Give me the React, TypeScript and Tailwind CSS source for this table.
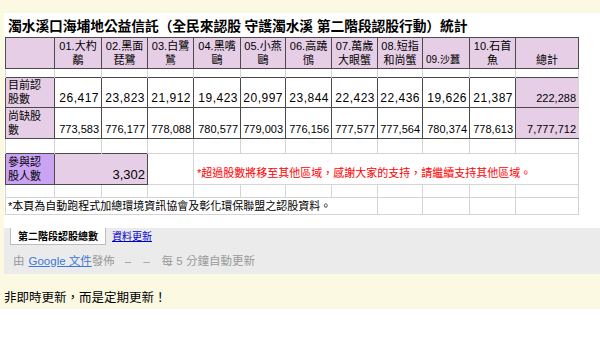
import React from "react"

const cols = ["w-[49px]", "w-[47px]", "w-[46px]", "w-[46px]", "w-[47px]", "w-[45px]", "w-[46px]", "w-[46px]", "w-[45px]", "w-[47px]", "w-[46px]", "w-[63px]"]

const species = [
  ["01.大杓", "鷸"],
  ["02.黑面", "琵鷺"],
  ["03.白鷺", "鷥"],
  ["04.黑嘴", "鷗"],
  ["05.小燕", "鷗"],
  ["06.高蹺", "鴴"],
  ["07.萬歲", "大眼蟹"],
  ["08.短指", "和尚蟹"],
  ["09.沙蠶", ""],
  ["10.石首", "魚"],
]

const adopted = ["26,417", "23,823", "21,912", "19,423", "20,997", "23,844", "22,423", "22,436", "19,626", "21,387"]
const missing = ["773,583", "776,177", "778,088", "780,577", "779,003", "776,156", "777,577", "777,564", "780,374", "778,613"]

const dark = "border border-[#4a4a4a]"
const light = "border border-[#d4d4d4]"

function Spacer({ h }: { h: string }) {
  return (
    <tr className={h}>
      {cols.map((_, i) => (
        <td key={i} className="border-x border-[#d4d4d4] p-0" />
      ))}
    </tr>
  )
}

export default function App() {
  return (
    <div className="w-[600px] h-[345px] bg-white overflow-hidden font-['Liberation_Sans','Noto_Sans_CJK_TC',sans-serif] text-black">
      <div className="bg-[#fbf9e2] pt-[13px] pl-[4px]">
        {/* published sheet */}
        <div className="bg-white pt-[3px] pb-[13px]">
          <h1 className="h-[21px] pl-[4px] text-[13.8px] leading-[21px] font-bold whitespace-nowrap tracking-[-0.1px]">
            濁水溪口海埔地公益信託（全民來認股 守護濁水溪 第二階段認股行動）統計
          </h1>

          <table className="table-fixed border-collapse w-[573px] ml-[1px] text-[11px] leading-[14px]">
            <colgroup>
              {cols.map((c, i) => (
                <col key={i} className={c} />
              ))}
            </colgroup>
            <tbody>
              <tr className="h-[31px] bg-[#e6cfe6]">
                <td className={`${dark} p-0`} />
                {species.map(([a, b], i) =>
                  b ? (
                    <td key={i} className={`${dark} p-0 align-bottom text-center pb-[1px]`}>
                      <div className="whitespace-nowrap">{a}</div>
                      <div className="whitespace-nowrap">{b}</div>
                    </td>
                  ) : (
                    <td key={i} className={`${dark} p-0 align-bottom pl-[3px] pb-[1px] text-[10px] whitespace-nowrap`}>
                      {a}
                    </td>
                  )
                )}
                <td className={`${dark} p-0 align-bottom text-center pb-[1px]`}>總計</td>
              </tr>

              <Spacer h="h-[9px]" />

              <tr className="h-[30px]">
                <td className={`${dark} bg-[#e6cfe6] p-0 pl-[2px] pb-[1px] align-bottom`}>
                  <div>目前認</div>
                  <div>股數</div>
                </td>
                {adopted.map((v, i) => (
                  <td key={i} className={`${dark} p-0 pr-[2px] pb-[2px] align-bottom text-right text-[12px] tracking-[0.5px]`}>
                    {v}
                  </td>
                ))}
                <td className="border-y border-l border-[#4a4a4a] border-r-[#d4d4d4] border-r bg-[#e6cfe6] p-0 pr-[2px] pb-[2px] align-bottom text-right">
                  222,288
                </td>
              </tr>

              <tr className="h-[31px]">
                <td className={`${dark} bg-[#e6cfe6] p-0 pl-[2px] pb-[1px] align-bottom`}>
                  <div>尚缺股</div>
                  <div>數</div>
                </td>
                {missing.map((v, i) => (
                  <td key={i} className={`${dark} p-0 pr-[2px] pb-[2px] align-bottom text-right whitespace-nowrap`}>
                    {v}
                  </td>
                ))}
                <td className="border-y border-l border-[#4a4a4a] border-r-[#d4d4d4] border-r bg-[#e6cfe6] p-0 pr-[2px] pb-[2px] align-bottom text-right">
                  7,777,712
                </td>
              </tr>

              <Spacer h="h-[15px]" />

              <tr className="h-[31px]">
                <td className={`${dark} bg-[#caa3f3] p-0 pl-[2px] pb-[1px] align-bottom`}>
                  <div>參與認</div>
                  <div>股人數</div>
                </td>
                <td colSpan={2} className={`${dark} bg-[#e6cfe6] p-0 pr-[2px] pb-[1px] align-bottom text-right text-[13px] leading-[16px]`}>
                  3,302
                </td>
                <td className={`${light} p-0`} />
                <td colSpan={8} className={`${light} p-0 pl-[3px] pt-[7px] text-[11px] text-[#ff0000] whitespace-nowrap`}>
                  *超過股數將移至其他區域，感謝大家的支持，請繼續支持其他區域。
                </td>
              </tr>

              <Spacer h="h-[13px]" />

              <tr className="h-[17px]">
                <td colSpan={8} className={`${light} p-0 pl-[2px] whitespace-nowrap`}>
                  *本頁為自動跑程式加總環境資訊協會及彰化環保聯盟之認股資料。
                </td>
                <td className={`${light} p-0`} />
                <td className={`${light} p-0`} />
                <td className={`${light} p-0`} />
                <td className={`${light} p-0`} />
              </tr>
            </tbody>
          </table>
        </div>

        {/* sheet tabs + publisher footer */}
        <div className="bg-[#ebebeb]">
          <div className="h-[21px] flex items-start">
            <div className="ml-[6px] w-[96px] h-[17px] bg-white border-x border-b border-[#bdbdbd] flex items-center justify-center text-[10px] font-bold whitespace-nowrap">
              第二階段認股總數
            </div>
            <a href="#" className="ml-[6px] h-[17px] flex items-center text-[10px] text-[#0000cc] underline">
              資料更新
            </a>
          </div>
          <div className="h-[25px] pl-[9px] flex items-center text-[11.5px] text-[#9a9a9a] whitespace-nowrap">
            <span>由</span>
            <a href="#" className="ml-[4px] text-[#3b78d8] underline">Google 文件</a>
            <span>發佈</span>
            <span className="ml-[10px]">–</span>
            <span className="ml-[12px]">–</span>
            <span className="ml-[12px]">每 5 分鐘自動更新</span>
          </div>
        </div>

        <p className="pt-[15px] pb-[2px] text-[12.5px] leading-[18px] -ml-[4px] pl-[4px]">非即時更新，而是定期更新！</p>
      </div>
    </div>
  )
}
